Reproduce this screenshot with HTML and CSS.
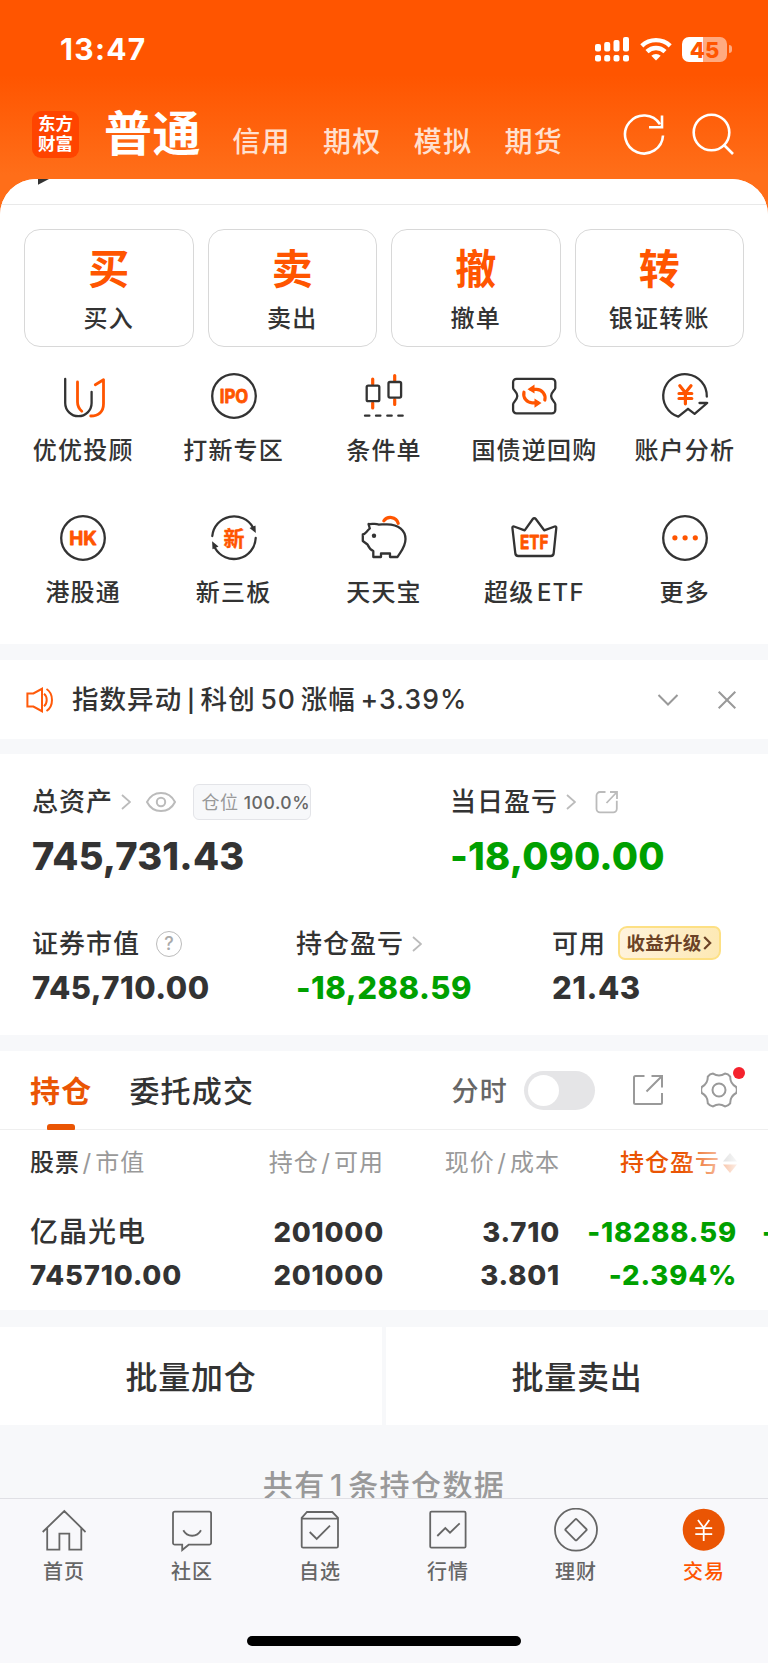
FILE: index.html
```html
<!DOCTYPE html>
<html lang="zh-CN">
<head>
    <meta charset="UTF-8">
    <meta name="viewport" content="width=device-width, initial-scale=1.0">
    <title>东方财富 - 交易</title>
    <link rel="stylesheet" href="styles.css">
</head>
<body>

<div class="page">
    <header class="header">
        <div class="status-bar">
            <span class="time">13:47</span>
            <div class="status-icons">
                <svg class="signal" width="34" height="25" viewBox="0 0 34 25" fill="#fff">
                    <rect x="0" y="7" width="6" height="7.5" rx="2"/><rect x="9.2" y="5" width="6" height="9.5" rx="2"/>
                    <rect x="18.5" y="3" width="6" height="11.5" rx="2"/><rect x="28" y="0" width="6" height="14.5" rx="2"/>
                    <rect x="0" y="18" width="6" height="6.5" rx="2"/><rect x="9.2" y="18" width="6" height="6.5" rx="2"/>
                    <rect x="18.5" y="18" width="6" height="6.5" rx="2"/><rect x="28" y="18" width="6" height="6.5" rx="2"/>
                </svg>
                <svg class="wifi" width="32" height="25" viewBox="0 0 32 25" fill="none" stroke="#fff" stroke-width="4.4">
                    <path d="M1.8 8.8a20.5 20.5 0 0 1 28.4 0"/>
                    <path d="M7 14.6a13 13 0 0 1 18 0"/>
                    <path d="M11.3 18.8a6.8 6.8 0 0 1 9.4 0L16 23.5z" fill="#fff" stroke="none"/>
                </svg>
                <div class="battery"><span>45</span></div>
                <i class="battery-tip"></i>
            </div>
        </div>
        <nav class="top-nav">
            <div class="logo"><span>东方</span><span>财富</span></div>
            <a class="nav-item active">普通</a>
            <a class="nav-item">信用</a>
            <a class="nav-item">期权</a>
            <a class="nav-item">模拟</a>
            <a class="nav-item">期货</a>
            <div class="nav-tools">
                <svg width="42" height="42" viewBox="0 0 42 42" fill="none" stroke="#fff" stroke-width="2.6">
                    <path d="M40 22.5A19 19 0 1 1 37 11.2"/>
                    <path d="M26 14.2h13V2.5"/>
                </svg>
                <svg width="42" height="42" viewBox="0 0 42 42" fill="none" stroke="#fff" stroke-width="2.6">
                    <circle cx="19.5" cy="19.5" r="17.8"/>
                    <path d="M31.5 31.5l9.5 9.5"/>
                </svg>
            </div>
        </nav>
    </header>

    <main class="sheet">
        <div class="sheet-top">
            <svg width="12" height="6" viewBox="0 0 12 6"><path d="M0 0h11L0 5.8z" fill="#333"/></svg>
        </div>

        <section class="actions">
            <div class="action"><b>买</b><span>买入</span></div>
            <div class="action"><b>卖</b><span>卖出</span></div>
            <div class="action"><b>撤</b><span>撤单</span></div>
            <div class="action"><b>转</b><span>银证转账</span></div>
        </section>

        <section class="menu">
            <div class="menu-item">
                <svg class="menu-icon" viewBox="0 0 46 46">
                    <path class="dark" d="M5.2 6v24a13.2 13.2 0 0 0 26.4 0V18.8"/>
                    <path class="hot" d="M17.5 9v20c0 4 1.5 6.8 4.3 9.2"/>
                    <path class="hot" d="M35.3 11.8l8.2-5v24c0 8-5 12.2-12.8 12.2"/>
                </svg>
                <span>优优投顾</span>
            </div>
            <div class="menu-item">
                <svg class="menu-icon" viewBox="0 0 46 46">
                    <circle class="dark" cx="23" cy="23" r="21.8"/>
                    <text class="icon-text" x="23" y="29.8" textLength="28.5" lengthAdjust="spacingAndGlyphs">IPO</text>
                </svg>
                <span>打新专区</span>
            </div>
            <div class="menu-item">
                <svg class="menu-icon" viewBox="0 0 46 46">
                    <path class="hot thick" d="M11.7 6v5M11.7 30v5M33.7 2.5v5M33.7 26.5v5"/>
                    <rect class="dark" x="5.7" y="12.6" width="12.6" height="15.6" rx="1.5"/>
                    <rect class="dark" x="27.5" y="9" width="12.6" height="15.6" rx="1.5"/>
                    <path class="dark" d="M4 42.7h4.4M15 42.7h4.4M26.3 42.7h4.4M37.3 42.7h4.4"/>
                </svg>
                <span>条件单</span>
            </div>
            <div class="menu-item">
                <svg class="menu-icon" viewBox="0 0 46 46">
                    <path class="dark" d="M5.5 5.8h35.4a3.4 3.4 0 0 1 3.4 3.4v5.8c0 2-4.2 4-4.2 8.1s4.2 6.1 4.2 8.1v5.8a3.4 3.4 0 0 1-3.4 3.4H5.5a3.4 3.4 0 0 1-3.4-3.4v-5.8c0-2 4.2-4 4.2-8.1s-4.2-6.1-4.2-8.1V9.2a3.4 3.4 0 0 1 3.4-3.4z"/>
                    <path class="hot thick" d="M20 16.4h5.5a8.5 8.5 0 0 1 8.3 10.6M27 29.8h-5.5A8.5 8.5 0 0 1 13 19.2"/>
                    <path class="hot-fill" d="M16.5 16.2l7-4.8v9.2zM30.5 30l-7 4.8v-9.2z"/>
                </svg>
                <span>国债逆回购</span>
            </div>
            <div class="menu-item">
                <svg class="menu-icon" viewBox="0 0 46 46">
                    <path class="dark" d="M44.8 23.6A21.8 21.8 0 1 0 16.3 43.7L26 35.8l6.6 5L45.2 30H37.5"/>
                    <path class="hot thick" d="M17.8 12.8l5.6 7 5.6-7M23.4 20v10.8M17 20.5h12.8M17 25.5h12.8"/>
                </svg>
                <span>账户分析</span>
            </div>
            <div class="menu-item">
                <svg class="menu-icon" viewBox="0 0 46 46">
                    <circle class="dark" cx="23" cy="23" r="21.8"/>
                    <text class="icon-text" x="23" y="29.8" textLength="27.5" lengthAdjust="spacingAndGlyphs">HK</text>
                </svg>
                <span>港股通</span>
            </div>
            <div class="menu-item">
                <svg class="menu-icon" viewBox="0 0 46 46">
                    <path class="dark" d="M1.3 21A21.8 21.8 0 0 1 42 12.5M44.7 23A21.8 21.8 0 0 1 4 33"/>
                    <path class="dark-fill" d="M38.5 13l6-2.5.3 7.5zM7.5 31.5l-6 2.8-.4-8z"/>
                    <text class="icon-text cn" x="23" y="30.5">新</text>
                </svg>
                <span>新三板</span>
            </div>
            <div class="menu-item">
                <svg class="menu-icon" viewBox="0 0 46 46">
                    <path class="dark" d="M7.5 9c3 .5 7-1 10 .6 2.5 0 5-.3 8.5-.3C38 9.3 44.5 16 44.5 24c0 8-4.5 12-8 18H29v-3.5h-9V42h-7.7v-6c-3.3-1.5-4.3-3-5.8-6.500l-4.7-3.500v-6.500C4.500 19 4.800 17 8.800 13.500z"/>
                    <circle class="dark-fill" cx="13" cy="20.7" r="2.2"/>
                    <path class="hot thick" d="M22.8 5.8c3.5-5 12.500-4.500 14.400 2.500"/>
                </svg>
                <span>天天宝</span>
            </div>
            <div class="menu-item">
                <svg class="menu-icon" viewBox="0 0 46 46">
                    <path class="dark" d="M3 11.5l10.7 3.8L21.8 4a1.9 1.9 0 0 1 3 0l8.4 11.3 10.5-3.8a1.2 1.2 0 0 1 1.6 1.3l-2.6 25.4a3 3 0 0 1-3 2.8H7.300a3 3 0 0 1-3-2.800L1.400 12.800A1.200 1.200 0 0 1 3 11.500z"/>
                    <text class="icon-text" x="23.3" y="34.3" textLength="28.5" lengthAdjust="spacingAndGlyphs">ETF</text>
                </svg>
                <span class="etf">超级 ETF</span>
            </div>
            <div class="menu-item">
                <svg class="menu-icon" viewBox="0 0 46 46">
                    <circle class="dark" cx="23" cy="23" r="21.8"/>
                    <circle class="hot-fill" cx="12.9" cy="22.8" r="2.6"/>
                    <circle class="hot-fill" cx="23.1" cy="22.8" r="2.6"/>
                    <circle class="hot-fill" cx="33.3" cy="22.8" r="2.6"/>
                </svg>
                <span>更多</span>
            </div>
        </section>

        <section class="notice">
            <svg width="28" height="26" viewBox="0 0 28 26" fill="none" stroke="#ff5a0a" stroke-width="2">
                <path d="M1.4 6.500h6L16 1.800v22.400l-8.600-4.700h-6z"/>
                <path d="M18 6.800c3.600 2.800 3.600 9.600 0 12.400M20.500 2c7.300 4.600 7.300 17.400 0 22"/>
            </svg>
            <span class="notice-text">指数异动 <u>|</u> 科创 50 涨幅 +3.39%</span>
            <svg width="22" height="14" viewBox="0 0 22 14" fill="none" stroke="#999" stroke-width="2"><path d="M1.5 2l9.5 9.5L20.5 2"/></svg>
            <svg width="20" height="20" viewBox="0 0 20 20" fill="none" stroke="#999" stroke-width="2"><path d="M1.7 1.7l16.6 16.6M18.3 1.7L1.7 18.3"/></svg>
        </section>

        <section class="assets">
            <div class="asset-row main-row">
                <div class="asset">
                    <div class="asset-label"><span>总资产</span>
                        <svg class="arrow" viewBox="0 0 10 16"><path d="M1 1l8 7-8 7"/></svg>
                        <svg class="eye" viewBox="0 0 30 20"><path d="M1 10C7-2 23-2 29 10 23 22 7 22 1 10z"/><circle cx="15" cy="10" r="4.2"/></svg>
                        <span class="position">仓位<em>100.0%</em></span>
                    </div>
                    <div class="amount big">745,731.43</div>
                </div>
                <div class="asset">
                    <div class="asset-label"><span>当日盈亏</span>
                        <svg class="arrow" viewBox="0 0 10 16"><path d="M1 1l8 7-8 7"/></svg>
                        <svg class="share" viewBox="0 0 24 24"><path d="M10.5 2H5a3.5 3.5 0 0 0-3.5 3.5v13.3a3.5 3.5 0 0 0 3.5 3.5h13.3a3.5 3.5 0 0 0 3.5-3.5v-8M11.5 13L21.5 2.5M15 2h7v7"/></svg>
                    </div>
                    <div class="amount big green">-18,090.00</div>
                </div>
            </div>
            <div class="asset-row sub-row">
                <div class="asset">
                    <div class="asset-label"><span>证券市值</span>
                        <span class="help">?</span>
                    </div>
                    <div class="amount">745,710.00</div>
                </div>
                <div class="asset">
                    <div class="asset-label"><span>持仓盈亏</span>
                        <svg class="arrow" viewBox="0 0 10 16"><path d="M1 1l8 7-8 7"/></svg>
                    </div>
                    <div class="amount green">-18,288.59</div>
                </div>
                <div class="asset">
                    <div class="asset-label"><span>可用</span>
                        <span class="upgrade"><span>收益升级</span><svg width="9" height="14" viewBox="0 0 9 14"><path d="M1.2 1l6 6-6 6" fill="none" stroke="#6b4226" stroke-width="2.2"/></svg></span>
                    </div>
                    <div class="amount">21.43</div>
                </div>
            </div>
        </section>

        <section class="holdings">
            <div class="tabs">
                <a class="tab active">持仓</a>
                <a class="tab">委托成交</a>
                <span class="switch-label">分时</span>
                <span class="switch"></span>
                <svg class="export" viewBox="0 0 32 32"><path d="M12.5 2H3.5a1.5 1.5 0 0 0-1.5 1.5v25a1.5 1.5 0 0 0 1.5 1.5h25a1.5 1.5 0 0 0 1.5-1.5V19M14.5 17.5L29.5 2.5M19.5 2H30v11.5"/></svg>
                <div class="settings">
                    <svg viewBox="-18 -18 36 36"><path d="M17.2-3Q18.5 0 17.2 3 11 6.3 11.2 13.4 9.2 16 6 16.4 0 12.7-6 16.4-9.2 16-11.2 13.4-11 6.3-17.2 3-18.5 0-17.2-3-11-6.3-11.2-13.4-9.2-16-6-16.4 0-12.7 6-16.4 9.2-16 11.2-13.4 11-6.3 17.2-3z"/><circle r="6.5"/></svg>
                    <i class="dot"></i>
                </div>
            </div>
            <div class="table">
                <div class="tr th">
                    <span><b>股票</b><u>/</u>市值</span>
                    <span>持仓<u>/</u>可用</span>
                    <span>现价<u>/</u>成本</span>
                    <span class="sorted">持仓盈亏<svg width="14" height="22" viewBox="0 0 14 22"><path d="M0 9.500L7 1l7 8.500z" fill="#aaa"/><path d="M0 12.500L7 21l7-8.500z" fill="#ea5504"/></svg></span>
                </div>
                <div class="tr">
                    <span class="stock">亿晶光电</span>
                    <span>201000</span>
                    <span>3.710</span>
                    <span class="green">-18288.59</span>
                    <span class="green">-18090.00</span>
                </div>
                <div class="tr">
                    <span>745710.00</span>
                    <span>201000</span>
                    <span>3.801</span>
                    <span class="green">-2.394%</span>
                </div>
            </div>
        </section>

        <section class="batch">
            <a>批量加仓</a>
            <a>批量卖出</a>
        </section>

        <p class="total">共有 1 条持仓数据</p>
    </main>

    <footer class="tab-bar">
        <nav class="tab-items">
            <a>
                <svg viewBox="0 0 44 44"><path d="M.7 24L22.3 3l21.3 21M5.2 19.8v21.900h12.200V25.600h9.900v16.100h12V19.800"/></svg>
                <span>首页</span>
            </a>
            <a>
                <svg viewBox="0 0 44 44"><path d="M4.800 3.700h34.500a1.800 1.800 0 0 1 1.800 1.800v29.400a1.800 1.800 0 0 1-1.800 1.800H18.700L12.200 42v-5.300H4.800A1.800 1.800 0 0 1 3 34.900V5.500a1.800 1.800 0 0 1 1.800-1.800zM13.300 22.300c4 7.300 13.700 7.300 17.700 0"/></svg>
                <span>社区</span>
            </a>
            <a>
                <svg viewBox="0 0 44 44"><path d="M3.700 9.800L9 4h25.300L40 9.800v28.400a1.500 1.500 0 0 1-1.500 1.500H5.200a1.500 1.500 0 0 1-1.500-1.500zM3.700 10.700H40M11.700 24l7 7L32 17.700"/></svg>
                <span>自选</span>
            </a>
            <a>
                <svg viewBox="0 0 44 44"><rect x="4.2" y="3.7" width="35.4" height="36" rx="1.2"/><path d="M11.3 28l8-8 4.700 4.700 9.700-9.400"/></svg>
                <span>行情</span>
            </a>
            <a>
                <svg viewBox="0 0 44 44"><circle cx="22" cy="21.7" r="21"/><rect x="14.2" y="13.9" width="15.6" height="15.6" rx="1" transform="rotate(45 22 21.7)"/></svg>
                <span>理财</span>
            </a>
            <a class="active">
                <svg viewBox="0 0 44 44"><circle cx="21.7" cy="21.7" r="21" fill="#ea5504" stroke="none"/><path stroke="#fff" d="M16 12l5.700 7.800L27.300 12M21.700 20v13M13.300 20.200h16.900M13.300 26.200h16.900"/></svg>
                <span>交易</span>
            </a>
        </nav>
        <div class="home-indicator"></div>
    </footer>
</div>

</body>
</html>
```
FILE: styles.css
```css
* {
    box-sizing: border-box;
}
body {
    margin: 0;
    font-family: Inter, "Noto Sans CJK SC", sans-serif;
    font-weight: 500;
    color: #333;
    background: #f7f8fa;
}
b, em, i, u {
    font-style: normal;
    text-decoration: none;
}
svg {
    display: block;
    flex: none;
}
.page {
    width: 768px;
    height: 1663px;
    display: flex;
    flex-direction: column;
    overflow: hidden;
    background: linear-gradient(#ff5500 0, #ff5500 75px, #ff6e19 175px);
}
.green {
    color: #00a000;
}

/* header */
.header {
    height: 179px;
    flex: none;
}
.status-bar {
    height: 98px;
    padding: 0 35px 0 60px;
    display: flex;
    align-items: center;
    justify-content: space-between;
    color: #fff;
}
.time {
    font-size: 30px;
    font-weight: 750;
    letter-spacing: 1.3px;
}
.status-icons {
    display: flex;
    align-items: center;
}
.wifi {
    margin-left: 11px;
}
.battery {
    width: 45px;
    height: 25px;
    margin-left: 10px;
    border-radius: 7px;
    background: linear-gradient(90deg, #fff 21px, #ffaa80 21px);
    color: #ff5500;
    font-size: 22px;
    font-weight: 800;
    line-height: 26px;
    text-align: center;
}
.battery-tip {
    width: 3px;
    height: 8px;
    margin: 0 1px 0 2px;
    border-radius: 0 4px 4px 0;
    background: #ffaa80;
}
.top-nav {
    height: 72px;
    padding: 0 34px 0 32px;
    display: flex;
    align-items: center;
}
.logo {
    width: 47px;
    height: 47px;
    margin-right: 25px;
    border-radius: 9px;
    background: #ff4400;
    color: #fff;
    font-size: 17.5px;
    font-weight: 700;
    line-height: 20px;
    display: flex;
    flex-direction: column;
    align-items: center;
    justify-content: center;
}
.nav-item {
    margin-right: 32.4px;
    padding-top: 16px;
    color: #ffe0d0;
    font-size: 28px;
    line-height: 34px;
    letter-spacing: 1.2px;
}
.nav-item.active {
    margin-right: 31px;
    padding-top: 0;
    color: #fff;
    font-size: 48px;
    font-weight: 700;
    line-height: 48px;
    letter-spacing: 0.6px;
}
.nav-tools {
    margin-left: auto;
    display: flex;
    gap: 27px;
}

/* white sheet */
.sheet {
    flex: 1;
    min-height: 0;
    overflow: hidden;
    border-radius: 36px 36px 0 0;
    background: #f7f8fa;
}
.sheet-top {
    height: 26px;
    padding-left: 38px;
    border-bottom: 1px solid #e9e9e9;
    background: #fff;
}
.actions {
    padding: 24px 24px 0;
    display: grid;
    grid-template-columns: repeat(4, 1fr);
    gap: 14px;
    background: #fff;
}
.action {
    height: 118px;
    padding-top: 16px;
    border: 1px solid #d8d8d8;
    border-radius: 16px;
    display: flex;
    flex-direction: column;
    align-items: center;
}
.action b {
    color: #ff5500;
    font-size: 41px;
    line-height: 46px;
}
.action span {
    margin-top: 9px;
    font-size: 24px;
    line-height: 36px;
    letter-spacing: 1.2px;
}
.menu {
    height: 297px;
    padding: 26px 8px 0;
    display: grid;
    grid-template-columns: repeat(5, 1fr);
    grid-auto-rows: 142px;
    background: #fff;
}
.menu-item {
    display: flex;
    flex-direction: column;
    align-items: center;
    font-size: 24px;
    line-height: 36px;
    letter-spacing: 1.2px;
    white-space: nowrap;
}
.menu-item span {
    margin-top: 14px;
}
.menu-item .etf {
    word-spacing: -5px;
}
.menu-icon {
    width: 46px;
    height: 46px;
    overflow: visible;
}
.dark, .hot {
    fill: none;
    stroke: #333;
    stroke-width: 2.3;
    stroke-linecap: round;
    stroke-linejoin: round;
}
.hot {
    stroke: #ff5500;
    stroke-width: 2.8;
}
.thick {
    stroke-width: 3.2;
}
.dark-fill {
    fill: #333;
}
.hot-fill {
    fill: #ff5500;
}
.icon-text {
    fill: #ff5500;
    stroke: #ff5500;
    stroke-width: 0.8;
    stroke-linejoin: round;
    font-size: 18.5px;
    font-weight: 700;
    letter-spacing: 0;
    text-anchor: middle;
}
.icon-text.cn {
    font-size: 21px;
    stroke-width: 0.4;
}

/* notice */
.notice {
    height: 79px;
    margin-top: 16px;
    padding: 0 31px 0 26px;
    display: flex;
    align-items: center;
    background: #fff;
}
.notice-text {
    flex: 1;
    margin-left: 18px;
    font-size: 26.5px;
    line-height: 36px;
    letter-spacing: 1.05px;
    word-spacing: -3.4px;
}
.notice-text u {
    font-size: 22px;
    font-weight: 600;
}
.notice svg:last-child {
    margin-left: 38px;
}

/* assets */
.assets {
    height: 281px;
    margin-top: 15px;
    padding-top: 28px;
    background: #fff;
}
.asset-row {
    padding-left: 32px;
    display: grid;
}
.main-row {
    grid-template-columns: 418px 1fr;
    height: 142px;
}
.sub-row {
    grid-template-columns: 264px 256px 1fr;
}
.asset-label {
    height: 40px;
    display: flex;
    align-items: center;
    font-size: 26px;
    line-height: 36px;
    letter-spacing: 1px;
}
.arrow {
    width: 10px;
    height: 16px;
    margin-left: 7.5px;
}
.arrow, .eye, .share {
    fill: none;
    stroke: #bbb;
    stroke-width: 1.8;
}
.eye {
    width: 30px;
    height: 20px;
    margin-left: 15px;
    stroke-width: 2;
}
.share {
    width: 24px;
    height: 24px;
    margin-left: 19px;
}
.position {
    width: 118px;
    height: 36px;
    margin-left: 17px;
    padding-left: 8px;
    border: 1px solid #e3e4e8;
    border-radius: 6px;
    background: #f7f8fa;
    color: #999;
    font-size: 18px;
    font-weight: 400;
    line-height: 36px;
    letter-spacing: 0.6px;
    white-space: nowrap;
}
.position em {
    margin-left: 5px;
    color: #666;
    font-size: 17.5px;
    font-weight: 500;
    letter-spacing: 0.6px;
}
.amount {
    margin-top: 5px;
    font-size: 31px;
    font-weight: 800;
    line-height: 37px;
    letter-spacing: 0.5px;
}
.amount.big {
    margin-top: 10px;
    font-size: 38px;
    line-height: 48px;
    letter-spacing: 0.2px;
}
.help {
    width: 26px;
    height: 26px;
    margin-left: 16px;
    border: 1.6px solid #bbb;
    border-radius: 50%;
    color: #aaa;
    font-size: 18px;
    line-height: 23px;
    letter-spacing: 0;
    text-align: center;
}
.upgrade {
    width: 103px;
    height: 34px;
    margin-left: 12px;
    margin-bottom: 2px;
    border: 2px solid #fde084;
    border-radius: 9px 7px 9px 7px;
    background: linear-gradient(100deg, #fff3dd, #fde9b4);
    color: #6b4226;
    font-size: 18.5px;
    font-weight: 700;
    letter-spacing: 0.2px;
    display: flex;
    align-items: center;
    justify-content: center;
    gap: 2px;
}

/* holdings */
.holdings {
    height: 259px;
    margin-top: 16px;
    overflow: hidden;
    background: #fff;
}
.tabs {
    height: 79px;
    padding: 0 31px 0 30px;
    border-bottom: 1px solid #efefef;
    display: flex;
    align-items: center;
}
.tab {
    height: 79px;
    margin-right: 37px;
    font-size: 30px;
    line-height: 81px;
    letter-spacing: 1.2px;
}
.tab.active {
    position: relative;
    color: #ea5504;
    font-weight: 700;
}
.tab.active::after {
    content: "";
    position: absolute;
    left: 17px;
    bottom: 0;
    width: 28px;
    height: 6px;
    border-radius: 3px 3px 1px 1px;
    background: #ea5504;
}
.switch-label {
    margin-left: auto;
    padding-top: 3px;
    color: #666;
    font-size: 27px;
    line-height: 36px;
    letter-spacing: 1.2px;
}
.switch {
    width: 71px;
    height: 39px;
    margin-left: 16px;
    padding: 4px;
    border-radius: 20px;
    background: #e5e5e7;
}
.switch::after {
    content: "";
    display: block;
    width: 31px;
    height: 31px;
    border-radius: 50%;
    background: #fff;
}
.export {
    width: 32px;
    height: 32px;
    margin-left: 37px;
}
.export, .settings svg {
    fill: none;
    stroke: #999;
    stroke-width: 2;
}
.settings {
    position: relative;
    width: 36px;
    margin-left: 37px;
}
.dot {
    position: absolute;
    top: -5px;
    right: -8px;
    width: 12px;
    height: 12px;
    border-radius: 50%;
    background: #f5222d;
}
.tr {
    padding-left: 30px;
    display: grid;
    grid-template-columns: 200px 154px 176px 177px 80px;
    font-size: 27.5px;
    font-weight: 800;
    line-height: 42.5px;
    letter-spacing: 0.8px;
    text-align: right;
    white-space: nowrap;
}
.tr span:first-child {
    text-align: left;
}
.tr span:nth-child(5) {
    padding-left: 25px;
}
.tr .stock {
    font-size: 28px;
    font-weight: 500;
    letter-spacing: 1px;
}
.th {
    height: 81px;
    padding-top: 11px;
    color: #999;
    font-size: 24px;
    font-weight: 400;
    line-height: 43px;
    letter-spacing: 1px;
}
.th b {
    color: #333;
    font-weight: 500;
}
.th u {
    margin: 0 3px 0 2.5px;
}
.sorted {
    position: relative;
    height: 43px;
    color: #ea5504;
    font-weight: 500;
    display: flex;
    align-items: center;
    justify-content: flex-end;
    gap: 3px;
}
.sorted::after {
    content: "";
    position: absolute;
    top: 0;
    right: 0;
    width: 54px;
    height: 43px;
    background: linear-gradient(90deg, rgba(255, 255, 255, 0), rgba(255, 255, 255, 0.9));
}

/* batch buttons */
.batch {
    height: 98px;
    margin-top: 17px;
    display: grid;
    grid-template-columns: 1fr 1fr;
    gap: 4px;
}
.batch a {
    padding-top: 4px;
    background: #fff;
    font-size: 32px;
    line-height: 94px;
    letter-spacing: 0.8px;
    text-align: center;
}
.total {
    margin: 42px 0 0;
    color: #999;
    font-size: 30px;
    line-height: 36px;
    letter-spacing: 1.4px;
    word-spacing: -5px;
    text-align: center;
}

/* bottom bar */
.tab-bar {
    height: 165px;
    flex: none;
    border-top: 1px solid #e0e0e5;
    background: #f8f8fb;
}
.tab-items {
    padding-top: 9px;
    display: grid;
    grid-template-columns: repeat(6, 128px);
}
.tab-items a {
    display: flex;
    flex-direction: column;
    align-items: center;
    color: #666;
    font-size: 20px;
    line-height: 28px;
    letter-spacing: 1px;
}
.tab-items svg {
    width: 44px;
    height: 44px;
    fill: none;
    stroke: #666;
    stroke-width: 1.8;
}
.tab-items span {
    margin-top: 6px;
}
.tab-items a.active {
    color: #ff5500;
}
.home-indicator {
    width: 274px;
    height: 10px;
    margin: 50px auto 0;
    border-radius: 5px;
    background: #000;
}
```
